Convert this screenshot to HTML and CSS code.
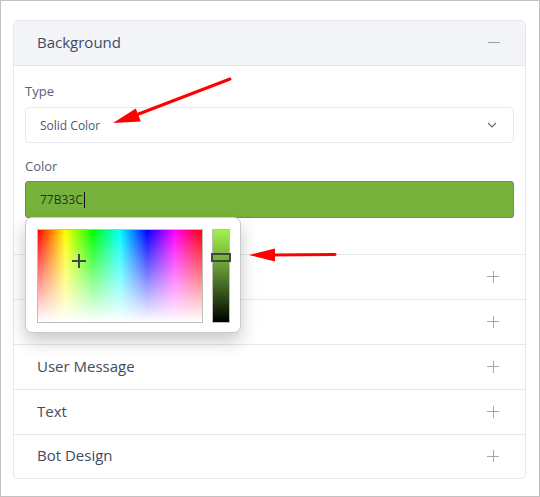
FILE: index.html
```html
<!DOCTYPE html>
<html>
<head>
<meta charset="utf-8">
<link rel="stylesheet" href="styles.css">
</head>
<body>
<div class="frame">
  <div class="panel">
    <div class="panel-head">
      <span class="title">Background</span>
      <span class="minus"></span>
    </div>
    <div class="panel-body">
      <div class="label">Type</div>
      <div class="select">
        <span>Solid Color</span>
        <svg class="chev" width="10" height="6" viewBox="0 0 10 6"><path d="M1 1 L5 5 L9 1" fill="none" stroke="#5b6b86" stroke-width="1.1"/></svg>
      </div>
      <div class="label label-color">Color</div>
      <div class="color-field">
        <div class="color-input"><span>77B33C</span><span class="caret"></span></div>
        <div class="picker">
          <div class="spectrum">
            <div class="spectrum-fade"></div>
            <div class="cross"></div>
          </div>
          <div class="hue">
            <div class="handle"></div>
          </div>
        </div>
      </div>
    </div>
    <div class="row"><span class="title">Header</span><span class="plus"></span></div>
    <div class="row"><span class="title">Bot Message</span><span class="plus"></span></div>
    <div class="row"><span class="title">User Message</span><span class="plus"></span></div>
    <div class="row"><span class="title">Text</span><span class="plus"></span></div>
    <div class="row"><span class="title">Bot Design</span><span class="plus"></span></div>
  </div>
  <svg class="arrows" width="540" height="497" viewBox="0 0 540 497">
    <line x1="230" y1="79" x2="136" y2="115" stroke="#ff0000" stroke-width="3" stroke-linecap="round"/>
    <polygon points="113,123 135.8,108.4 140.8,121.4" fill="#ff0000"/>
    <line x1="335" y1="254.5" x2="270" y2="255" stroke="#ff0000" stroke-width="3" stroke-linecap="round"/>
    <polygon points="249,255 275,248.5 275,261.5" fill="#ff0000"/>
  </svg>
</div>
</body>
</html>
```
FILE: styles.css
```css
* { box-sizing: border-box; }
html, body { margin: 0; padding: 0; background: #ffffff; }
body { font-family: "Open Sans", "DejaVu Sans", sans-serif; }

.frame {
  position: relative;
  width: 540px;
  height: 497px;
  border: 1px solid #c2c2c2;
  padding: 19px 0 0 12px;
}

.panel {
  width: 513px;
  border: 1px solid #e6e7ee;
  border-radius: 5px;
  background: #fff;
}

.panel-head {
  height: 45px;
  background: #f3f4f8;
  border-bottom: 1px solid #e6e7ee;
  border-radius: 5px 5px 0 0;
  display: flex;
  align-items: center;
  justify-content: space-between;
  padding: 0 25px 3px 23px;
}

.title {
  font-size: 15px;
  line-height: 20px;
  color: #434b5f;
}

.minus {
  width: 12px;
  height: 1px;
  background: #9aa0ad;
  margin-top: 2px;
}

.plus {
  position: relative;
  width: 12px;
  height: 12px;
  margin-top: 2px;
}
.plus::before, .plus::after {
  content: "";
  position: absolute;
  background: #a3a7b0;
}
.plus::before { left: 0; top: 5.5px; width: 12px; height: 1px; }
.plus::after { left: 5.5px; top: 0; width: 1px; height: 12px; }

.panel-body {
  padding: 16px 11px 36px 11px;
}

.label {
  font-size: 13px;
  line-height: 18px;
  color: #59607a;
  margin-bottom: 7px;
}
.label-color { margin-top: 14px; margin-bottom: 6px; }

.select {
  height: 36px;
  border: 1px solid #e7e8ee;
  border-radius: 4px;
  display: flex;
  align-items: center;
  justify-content: space-between;
  padding: 0 16px 0 14px;
  font-size: 12px;
  color: #4e586a;
}

.color-field { position: relative; }

.color-input {
  height: 37px;
  background: #77b33c;
  border: 1px solid #7a72c4;
  border-radius: 3px;
  display: flex;
  align-items: center;
  padding: 0 14px;
  font-size: 12px;
  color: #26321a;
}
.caret {
  display: inline-block;
  width: 1px;
  height: 16px;
  background: #111;
  margin-left: 1px;
}

.picker {
  position: absolute;
  left: 0;
  top: 36px;
  width: 216px;
  height: 116px;
  background: #fff;
  border: 1px solid #c9c9c9;
  border-radius: 7px;
  box-shadow: 0 8px 18px rgba(0, 0, 0, 0.22);
  padding: 11px 0 0 11px;
  display: flex;
  gap: 9px;
  z-index: 2;
}

.spectrum {
  position: relative;
  width: 166px;
  height: 94px;
  border: 1px solid #bdbdbd;
  background: linear-gradient(to right, #ff0000 0%, #ffff00 16.67%, #00ff00 33.33%, #00ffff 50%, #0000ff 66.67%, #ff00ff 83.33%, #ff0000 100%);
}
.spectrum-fade {
  position: absolute;
  inset: 0;
  background: linear-gradient(to bottom, rgba(255,255,255,0) 0%, #ffffff 100%);
}
.cross {
  position: absolute;
  left: 34px;
  top: 24px;
  width: 14px;
  height: 14px;
}
.cross::before, .cross::after {
  content: "";
  position: absolute;
  background: #444;
}
.cross::before { left: 0; top: 6px; width: 14px; height: 2px; }
.cross::after { left: 6px; top: 0; width: 2px; height: 14px; }

.hue {
  position: relative;
  width: 18px;
  height: 94px;
  border: 1px solid #bdbdbd;
  background: linear-gradient(to bottom, #a4f04f 0%, #77b33c 30%, #3d5c1f 65%, #000000 100%);
}
.handle {
  position: absolute;
  left: -2px;
  top: 23px;
  width: 20px;
  height: 9px;
  border: 2px solid #444;
  background: transparent;
}

.row {
  height: 45px;
  border-top: 1px solid #e6e7ee;
  display: flex;
  align-items: center;
  justify-content: space-between;
  padding: 0 26px 3px 23px;
}
.row:last-child { height: 44px; }

.arrows {
  position: absolute;
  left: -1px;
  top: -1px;
  z-index: 3;
  pointer-events: none;
}
```
